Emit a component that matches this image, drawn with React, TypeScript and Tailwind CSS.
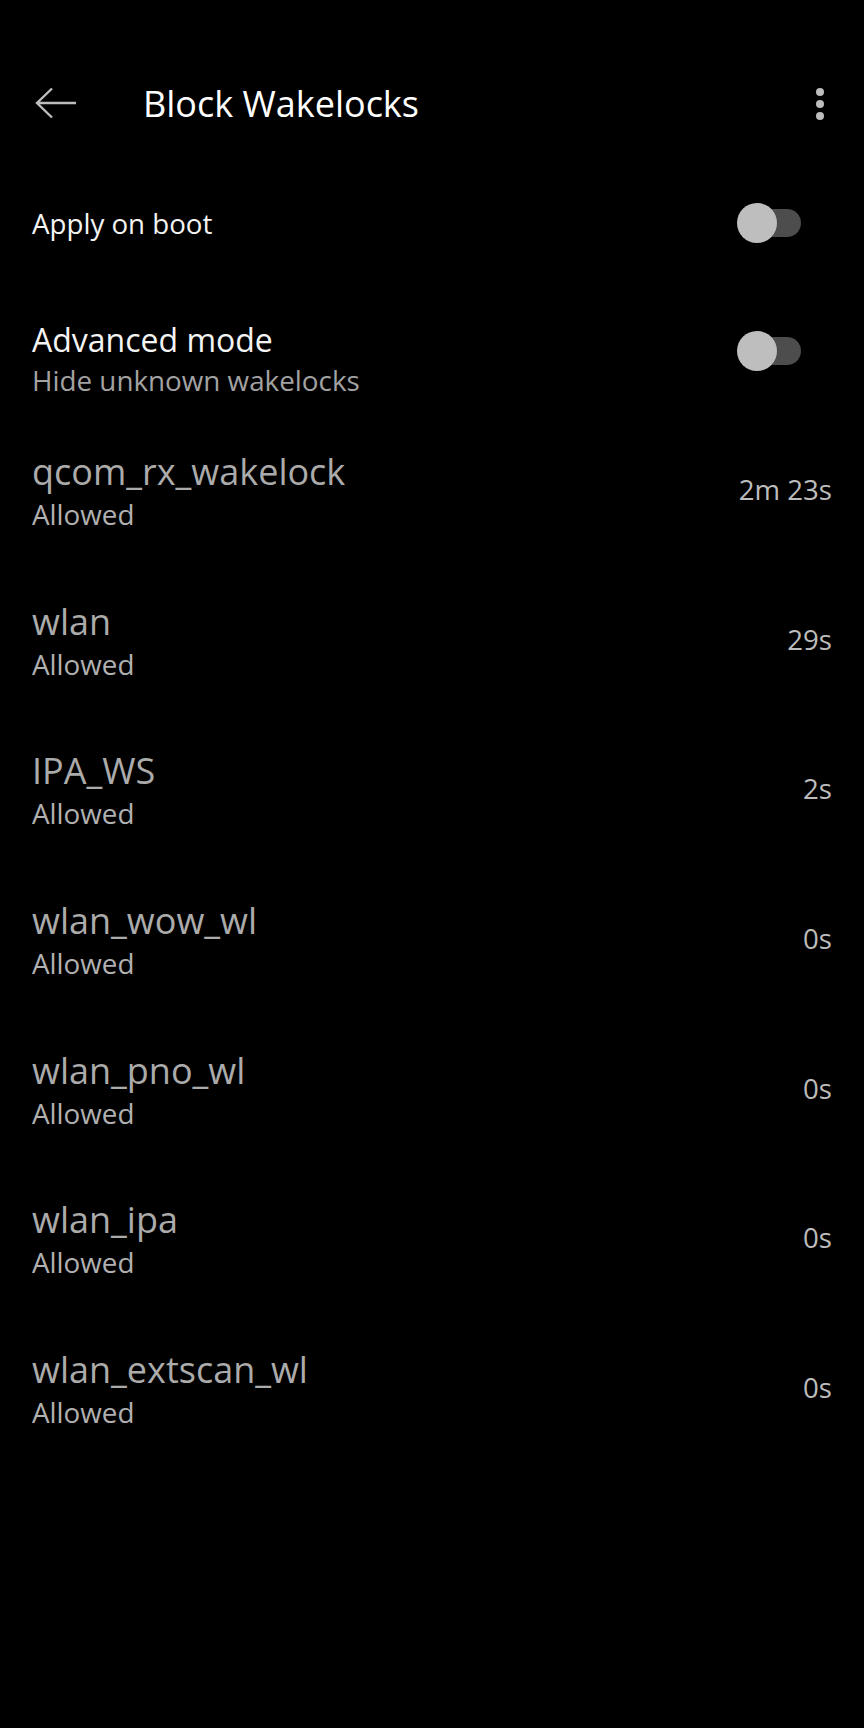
import React from "react";

function Toggle({ className = "" }: { className?: string }) {
  return (
    <div className={"relative w-[64px] h-[40px] shrink-0 mr-[31px] " + className}>
      <div className="absolute right-0 top-[6px] h-[28px] w-[52px] rounded-full bg-[#4d4d4d]" />
      <div className="absolute left-0 top-0 h-[40px] w-[40px] rounded-full bg-[#bebebe]" />
    </div>
  );
}

const rows = [
  { name: "qcom_rx_wakelock", time: "2m 23s" },
  { name: "wlan", time: "29s" },
  { name: "IPA_WS", time: "2s" },
  { name: "wlan_wow_wl", time: "0s" },
  { name: "wlan_pno_wl", time: "0s" },
  { name: "wlan_ipa", time: "0s" },
  { name: "wlan_extscan_wl", time: "0s" },
];

export default function App() {
  return (
    <div
      className="w-full min-h-[1728px] bg-black pt-[64px]"
      style={{ fontFamily: '"Open Sans", "Noto Sans", sans-serif' }}
    >
      {/* Header */}
      <div className="h-[80px] flex items-center pl-[32px] pr-[40px]">
        <svg width="48" height="48" viewBox="0 0 48 48" className="shrink-0">
          <path
            d="M5 23 H44 M20 8.5 L5 23 L20 37.5"
            fill="none"
            stroke="#bdbdbd"
            strokeWidth="2.4"
            strokeLinecap="butt"
            strokeLinejoin="miter"
          />
        </svg>
        <div className="ml-[63px] text-[36px] leading-[48px] font-medium text-white">
          Block Wakelocks
        </div>
        <div className="ml-auto flex flex-col gap-[4px]">
          <div className="w-[8px] h-[8px] rounded-full bg-[#bdbdbd]" />
          <div className="w-[8px] h-[8px] rounded-full bg-[#bdbdbd]" />
          <div className="w-[8px] h-[8px] rounded-full bg-[#bdbdbd]" />
        </div>
      </div>

      {/* Apply on boot */}
      <div className="mt-[39px] h-[80px] flex items-center pl-[32px] pr-[32px]">
        <div className="text-[27.7px] leading-[40px] text-[#f4f4f4]">Apply on boot</div>
        <Toggle className="ml-auto" />
      </div>

      {/* Advanced mode */}
      <div className="mt-[57px] flex items-start pl-[32px] pr-[32px]">
        <div className="flex flex-col">
          <div className="text-[32px] leading-[40px] text-[#f4f4f4]">Advanced mode</div>
          <div className="text-[27.8px] leading-[40px] text-[#a2a2a2]">Hide unknown wakelocks</div>
        </div>
        <Toggle className="ml-auto mt-[11px]" />
      </div>

      {/* Wakelock list */}
      <div className="mt-[50px] flex flex-col">
        {rows.map((r) => (
          <div key={r.name} className="h-[149.7px] flex items-start justify-between px-[32px]">
            <div className="flex flex-col">
              <div className="text-[36px] leading-[43px] text-[#ababab]">{r.name}</div>
              <div className="text-[27.8px] leading-[43px] text-[#b0b0b0]">Allowed</div>
            </div>
            <div className="mt-[18px] text-[27.6px] leading-[43px] text-[#bcbcbc]">{r.time}</div>
          </div>
        ))}
      </div>
    </div>
  );
}
